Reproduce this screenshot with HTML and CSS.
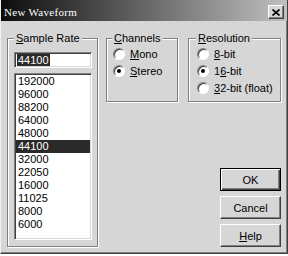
FILE: index.html
```html
<!DOCTYPE html>
<html lang="en">
<head>
    <meta charset="UTF-8">
    <title>New Waveform</title>
    <link rel="stylesheet" href="styles.css">
</head>
<body>
    <div class="window">
        <div class="titlebar">
            <span class="title">New Waveform</span>
            <span class="close">
                <svg width="8" height="7" viewBox="0 0 8 7"><path d="M0.5 0.5 L7.5 6.5 M7.5 0.5 L0.5 6.5" stroke="#000" stroke-width="1.6" fill="none"/></svg>
            </span>
        </div>

        <div class="dialog">
            <fieldset class="group rates">
                <legend><u>S</u>ample Rate</legend>
                <div class="edit"><span class="sel">44100</span></div>
                <ul class="list">
                    <li>192000</li>
                    <li>96000</li>
                    <li>88200</li>
                    <li>64000</li>
                    <li>48000</li>
                    <li class="sel">44100</li>
                    <li>32000</li>
                    <li>22050</li>
                    <li>16000</li>
                    <li>11025</li>
                    <li>8000</li>
                    <li>6000</li>
                </ul>
            </fieldset>

            <div class="side">
                <div class="options">
                    <fieldset class="group channels">
                        <legend><u>C</u>hannels</legend>
                        <div class="opt"><span class="radio"></span><span><u>M</u>ono</span></div>
                        <div class="opt"><span class="radio on"></span><span><u>S</u>tereo</span></div>
                    </fieldset>
                    <fieldset class="group resolution">
                        <legend><u>R</u>esolution</legend>
                        <div class="opt"><span class="radio"></span><span><u>8</u>-bit</span></div>
                        <div class="opt"><span class="radio on"></span><span>1<u>6</u>-bit</span></div>
                        <div class="opt"><span class="radio"></span><span><u>3</u>2-bit (float)</span></div>
                    </fieldset>
                </div>

                <div class="buttons">
                    <button class="btn default">OK</button>
                    <button class="btn">Cancel</button>
                    <button class="btn"><u>H</u>elp</button>
                </div>
            </div>
        </div>
    </div>
</body>
</html>
```

FILE: styles.css
```css
* {
    margin: 0;
    padding: 0;
    box-sizing: border-box;
}

body {
    font-family: "Liberation Sans", Arial, sans-serif;
    font-size: 11px;
    color: #000;
    background: #fff;
}

.window {
    width: 288px;
    height: 254px;
    background: #d6d6d6;
    border-left: 1px solid #f0f0f0;
    border-right: 1px solid #404040;
    border-bottom: 1px solid #404040;
    box-shadow: inset -1px -1px #808080;
}

/* title bar */
.titlebar {
    height: 21px;
    display: flex;
    align-items: flex-end;
    justify-content: space-between;
    padding: 0 3px 2px 3px;
    background: linear-gradient(to right, #0c0c0c, #c0c0c0);
}

.title {
    font-family: "Liberation Serif", "Times New Roman", serif;
    font-size: 11px;
    letter-spacing: 0.3px;
    line-height: 14px;
    color: #fff;
}

.close {
    width: 16px;
    height: 14px;
    display: flex;
    align-items: center;
    justify-content: center;
    background: #d6d6d6;
    border: 1px solid;
    border-color: #fff #404040 #404040 #fff;
    box-shadow: inset -1px -1px #808080;
}

/* dialog body */
.dialog {
    display: flex;
    gap: 8px;
    padding: 11px 0 0 6px;
}

.group {
    border: 1px solid #808080;
    box-shadow: inset 1px 1px #fff, 1px 1px #fff;
    min-width: 0;
}

.group legend {
    padding: 0 2px;
    line-height: 12px;
    background: #d6d6d6;
}

.rates {
    width: 91px;
    height: 215px;
    padding: 8px 6px 0 6px;
}

.edit {
    height: 16px;
    width: 78px;
    padding: 1px 2px;
    background: #fff;
    border: 1px solid;
    border-color: #808080 #fff #fff #808080;
    box-shadow: inset 1px 1px #404040, inset -1px -1px #d6d6d6;
}

.edit .sel {
    display: inline-block;
    line-height: 12px;
    padding: 0 1px;
    background: #2a2a2a;
    color: #fff;
}

.list {
    list-style: none;
    width: 78px;
    height: 167px;
    margin-top: 5px;
    padding-top: 1px;
    background: #fff;
    border: 1px solid;
    border-color: #808080 #fff #fff #808080;
    box-shadow: inset 1px 1px #404040, inset -1px -1px #d6d6d6;
}

.list li {
    height: 13px;
    line-height: 13px;
    padding-left: 2px;
    margin: 0 1px;
}

.list li.sel {
    background: #2a2a2a;
    color: #fff;
}

.side {
    width: 175px;
    display: flex;
    flex-direction: column;
}

.options {
    display: flex;
    gap: 10px;
}

.channels {
    width: 72px;
    height: 70px;
    padding: 1px 4px 0 5px;
}

.resolution {
    width: 93px;
    height: 70px;
    padding: 1px 4px 0 7px;
}

.opt {
    display: flex;
    align-items: center;
    gap: 5px;
    height: 17px;
    padding-left: 1px;
    white-space: nowrap;
}

.radio {
    position: relative;
    width: 12px;
    height: 12px;
    flex: none;
    border-radius: 50%;
    background: #fff;
    border: 1px solid;
    border-color: #808080 #fff #fff #808080;
    box-shadow: inset 1px 1px #404040;
}

.radio.on::after {
    content: "";
    position: absolute;
    left: 3px;
    top: 3px;
    width: 4px;
    height: 4px;
    border-radius: 50%;
    background: #000;
}

.buttons {
    margin-top: auto;
    align-self: flex-end;
    display: flex;
    flex-direction: column;
    gap: 5px;
}

.btn {
    width: 61px;
    height: 23px;
    font-family: "Liberation Sans", Arial, sans-serif;
    font-size: 11px;
    color: #000;
    background: #d6d6d6;
    border: 1px solid;
    border-color: #fff #404040 #404040 #fff;
    box-shadow: inset -1px -1px #808080;
}

.btn.default {
    border-color: #000;
    box-shadow: inset 1px 1px #fff, inset -1px -1px #404040, inset -2px -2px #808080;
}
```
